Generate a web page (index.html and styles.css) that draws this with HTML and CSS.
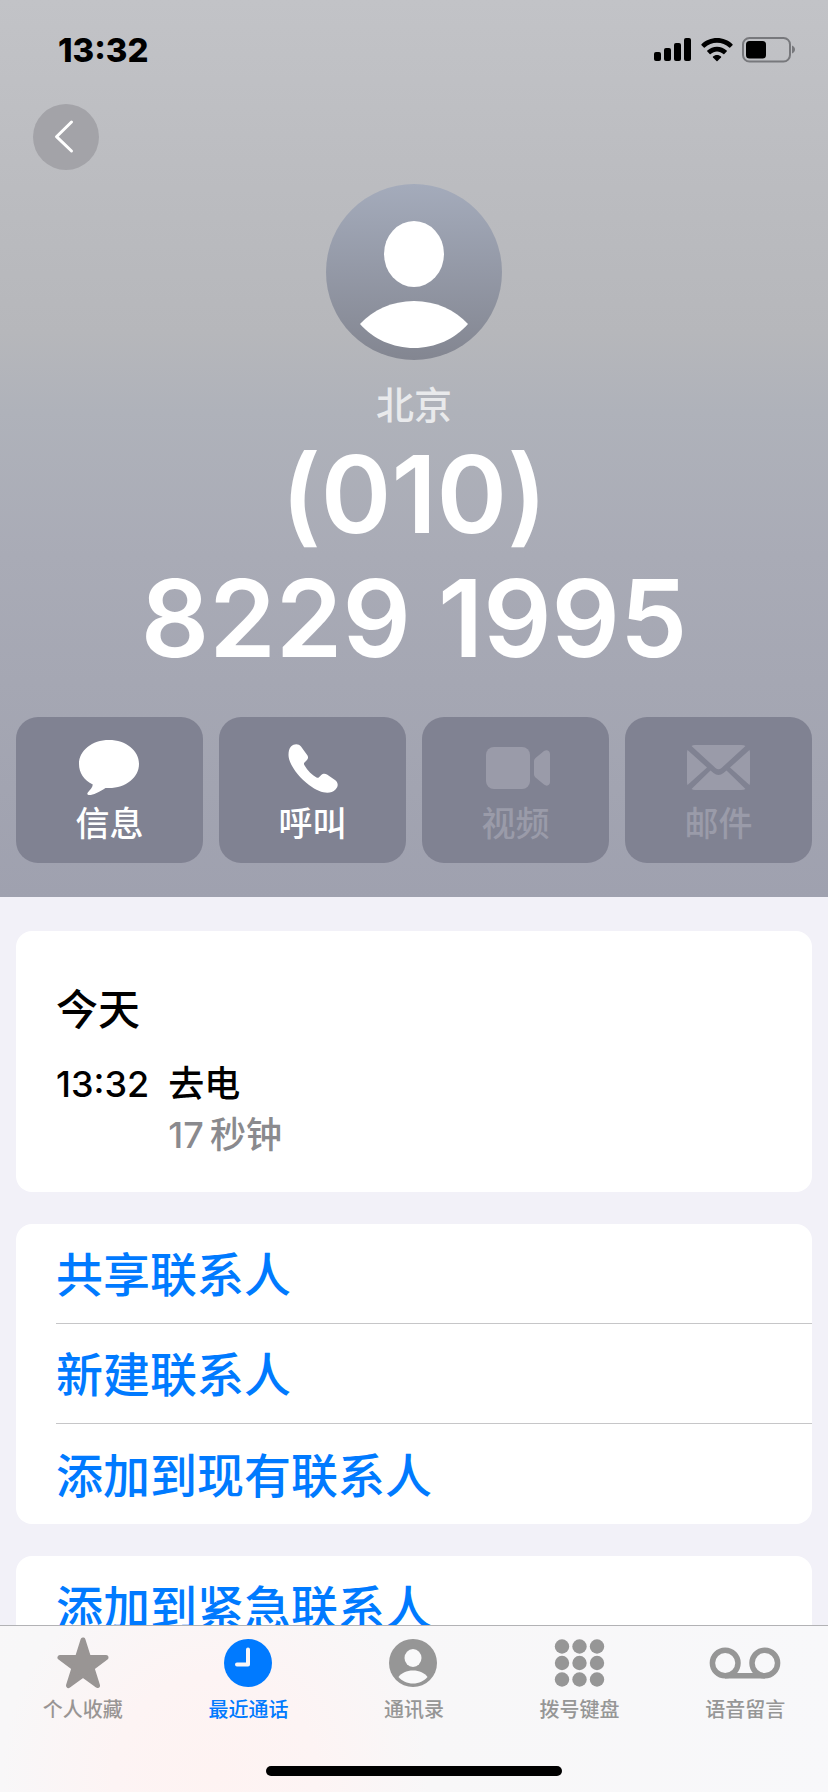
FILE: index.html
```html
<!DOCTYPE html>
<html lang="zh-CN">
<head>
<meta charset="utf-8">
<meta name="viewport" content="width=device-width, initial-scale=1">
<title>(010) 8229 1995</title>
<link rel="stylesheet" href="styles.css">
</head>
<body>
<main class="content">
  <header class="hero">
    <div class="status">
      <time class="clock">13:32</time>
      <div class="indicators">
        <svg class="signal" width="38" height="24" viewBox="0 0 38 24" aria-hidden="true">
          <rect x="0" y="14" width="7" height="9" rx="2"/><rect x="10" y="10" width="7" height="13" rx="2"/><rect x="20" y="5" width="7" height="18" rx="2"/><rect x="30" y="0" width="7" height="23" rx="2"/>
        </svg>
        <svg class="wifi" width="32" height="24" viewBox="0 0 32 24" aria-hidden="true">
          <path d="M16 0C22 0 27.500 2.300 31.500 6.200Q32 6.700 31.500 7.200L29.200 9.500Q28.700 10 28.200 9.500C24.900 6.400 20.600 4.700 16 4.700S7.100 6.400 3.800 9.500Q3.300 10 2.800 9.500L.5 7.200Q0 6.700.5 6.200C4.500 2.300 10 0 16 0Z"/>
          <path d="M16 8.700c3.700 0 7 1.400 9.700 3.700q.5.500 0 1l-2.400 2.500q-.5.500-1 0C20.500 14.400 18.300 13.500 16 13.500s-4.500.9-6.300 2.400q-.5.500-1 0L6.300 13.400q-.5-.5 0-1C9 10.100 12.300 8.700 16 8.700Z"/>
          <path d="M16 17c1.600 0 3 .6 4 1.500q.5.500 0 1L16.500 23q-.5.500-1 0L12 19.500q-.5-.5 0-1C13 17.600 14.400 17 16 17Z"/>
        </svg>
        <svg class="battery" width="54" height="26" viewBox="0 0 54 26" aria-hidden="true">
          <rect x="1" y="1" width="47" height="23.500" rx="6.500" fill="none" stroke="#77787c" stroke-width="2"/>
          <rect x="4" y="4" width="20" height="17.500" rx="3.500"/>
          <path d="M50 8.500c2 .8 3 2.300 3 4s-1 3.200-3 4Z" fill="#77787c"/>
        </svg>
      </div>
    </div>
    <nav class="nav">
      <button class="back" type="button" aria-label="返回">
        <svg width="66" height="66" viewBox="0 0 66 66" aria-hidden="true"><path d="M38.500 18L23.500 32.700L38.500 47" fill="none" stroke="#fff" stroke-width="3" stroke-linecap="round" stroke-linejoin="round"/></svg>
      </button>
    </nav>
    <svg class="avatar" width="176" height="176" viewBox="0 0 176 176" role="img" aria-label="头像">
      <defs><linearGradient id="shade" x1="0" y1="0" x2="0" y2="1"><stop offset="0" stop-color="#a4abbb"/><stop offset="1" stop-color="#838691"/></linearGradient></defs>
      <circle cx="88" cy="88" r="88" fill="url(#shade)"/>
      <ellipse cx="88" cy="70" rx="30" ry="33" fill="#fff"/>
      <path d="M34 140C47 126 66 117 88 117S129 126 142 140C129 155 109 164 88 164S47 155 34 140Z" fill="#fff"/>
    </svg>
    <p class="place">北京</p>
    <h1 class="number">(010) <br>8229 1995</h1>
    <div class="actions">
      <button class="action" type="button">
        <svg width="66" height="60" viewBox="0 0 66 60" aria-hidden="true"><path d="M32 6C49 6 62 16.500 62 30S49 54 32 54L28.500 54C22 58.500 15 61.500 11.500 61Q9.500 60.500 10.800 58.500C13 56 15.500 53.500 15.800 50.500C7 46 2 39 2 30C2 16.500 15 6 32 6Z"/></svg>
        <span>信息</span>
      </button>
      <button class="action" type="button">
        <svg width="66" height="60" viewBox="0 0 66 60" aria-hidden="true"><path d="M11 12.500C14 9.500 18.500 9.300 21 12.500L27.500 21.500C28.500 23.500 28 25 26.500 26.500L24.500 28.500Q23.500 29.500 24.300 31C27.500 36.500 32 41 36.500 43.500Q38 44.300 39 43.300L41 41.200C43 39.300 45 39.300 47 40.500L55 46C58.500 48.500 58.500 52.500 55.500 55.500C50 61 40.500 59.500 29 51C18.500 43 8.500 30 8.500 21C8.500 17.500 9 14.500 11 12.500Z"/></svg>
        <span>呼叫</span>
      </button>
      <button class="action" type="button" disabled>
        <svg width="66" height="60" viewBox="0 0 66 60" aria-hidden="true"><rect x="3" y="13" width="44" height="42" rx="8"/><path d="M51 27Q51 25.500 52.500 24L61 17C64 15 67 17 67 20V48C67 51 64 53 61 50.500L52.500 43.500Q51 42 51 40.500Z"/></svg>
        <span>视频</span>
      </button>
      <button class="action" type="button" disabled>
        <svg width="66" height="60" viewBox="0 0 66 60" aria-hidden="true"><path d="M5.500 12Q7 11 9 11H55Q58 11 59.500 12L35.500 34Q32.500 36.500 29.500 34ZM1.500 16L21 33.500L1.500 51Q1 50 1 48V19Q1 17 1.500 16ZM63.500 16L44 33.500L63.500 51Q64 50 64 48V19Q64 17 63.500 16ZM24.500 36.500L27.500 39Q32.500 43 37.500 39L40.500 36.500L59.500 55Q58 56 55 56H9Q7 56 5.500 55Z"/></svg>
        <span>邮件</span>
      </button>
    </div>
  </header>

  <div class="cards">
    <section class="card log">
      <h2 class="day">今天</h2>
      <div class="call">
        <time class="call-time">13:32</time>
        <div class="call-info">
          <p class="line">去电</p>
          <p class="line muted">17&#8201;秒钟</p>
        </div>
      </div>
    </section>
    <section class="card">
      <button class="row" type="button">共享联系人</button>
      <button class="row" type="button">新建联系人</button>
      <button class="row" type="button">添加到现有联系人</button>
    </section>
    <section class="card">
      <button class="row" type="button">添加到紧急联系人</button>
    </section>
  </div>
</main>

<footer class="dock">
  <nav class="tabs">
    <a class="tab warm" href="#favorites">
      <svg width="72" height="60" viewBox="0 0 72 60" aria-hidden="true"><path d="M36 9L41.500 26.500H59L45 37L50.500 54.500L36 44L21.500 54.500L27 37L13 26.500H30.500Z" fill="currentColor" stroke="currentColor" stroke-width="5" stroke-linejoin="round"/></svg>
      <span>个人收藏</span>
    </a>
    <a class="tab active" href="#recents" aria-current="page">
      <svg width="72" height="60" viewBox="0 0 72 60" aria-hidden="true"><circle cx="36" cy="32" r="24" fill="currentColor"/><path d="M36 18.500V33.500H25" fill="none" stroke="#faf7f8" stroke-width="4" stroke-linecap="round" stroke-linejoin="round"/></svg>
      <span>最近通话</span>
    </a>
    <a class="tab" href="#contacts">
      <svg width="72" height="60" viewBox="0 0 72 60" aria-hidden="true"><circle cx="35" cy="32" r="24" fill="currentColor"/><ellipse cx="35" cy="27" rx="8.500" ry="9" fill="#f9f9fa"/><path d="M20.500 46C23.500 42 28.500 39.500 35 39.500S46.500 42 49.500 46C46 50 41 52.500 35 52.500S24 50 20.500 46Z" fill="#f9f9fa"/></svg>
      <span>通讯录</span>
    </a>
    <a class="tab" href="#keypad">
      <svg width="72" height="60" viewBox="0 0 72 60" aria-hidden="true" fill="currentColor"><circle cx="18" cy="15.500" r="7.200"/><circle cx="35.500" cy="15.500" r="7.200"/><circle cx="53" cy="15.500" r="7.200"/><circle cx="18" cy="32" r="7.200"/><circle cx="35.500" cy="32" r="7.200"/><circle cx="53" cy="32" r="7.200"/><circle cx="18" cy="48.500" r="7.200"/><circle cx="35.500" cy="48.500" r="7.200"/><circle cx="53" cy="48.500" r="7.200"/></svg>
      <span>拨号键盘</span>
    </a>
    <a class="tab" href="#voicemail">
      <svg width="72" height="60" viewBox="0 0 72 60" aria-hidden="true" fill="none" stroke="currentColor" stroke-width="5.500"><circle cx="16.200" cy="32" r="12.800"/><circle cx="55.800" cy="32" r="12.800"/><path d="M16 44.800H56"/></svg>
      <span>语音留言</span>
    </a>
  </nav>
  <div class="home"></div>
</footer>
</body>
</html>
```
FILE: styles.css
```css
* { box-sizing: border-box; }

body {
  margin: 0;
  height: 100vh;
  display: flex;
  flex-direction: column;
  overflow: hidden;
  background: #f2f1f8;
  color: #000;
  font-family: Inter, "Noto Sans CJK SC", sans-serif;
  font-weight: 500;
}

h1, h2, p { margin: 0; font-weight: 500; }

button {
  border: 0;
  padding: 0;
  font: inherit;
  color: inherit;
  background: none;
}

svg { display: block; }

.content {
  flex: 1;
  min-height: 0;
  overflow: hidden;
}

.hero {
  display: flex;
  flex-direction: column;
  align-items: center;
  padding: 0 16px 34px;
  color: #fff;
  background: linear-gradient(#c2c3c7 0%, #bbbcc0 21%, #b6b7bb 37%, #afb2ba 46%, #a9abb6 62%, #a5a7b3 76%, #9fa1af 100%);
}

.status {
  align-self: stretch;
  display: flex;
  justify-content: space-between;
  align-items: center;
  height: 100px;
  padding: 0 16px 0 42px;
  color: #000;
}

.clock {
  font-size: 33px;
  font-weight: 800;
}

.indicators {
  display: flex;
  align-items: center;
  gap: 9px;
}

.nav {
  align-self: stretch;
  height: 84px;
  padding: 4px 17px 0;
}

.back {
  width: 66px;
  height: 66px;
  border-radius: 50%;
  background: #a3a3a8;
}

.place {
  margin-top: 20px;
  font-size: 38px;
  line-height: 50px;
  color: #e9eaec;
}

.number {
  margin-top: 2px;
  font-size: 107px;
  font-weight: 600;
  font-feature-settings: "calt" 0;
  line-height: 124px;
  text-align: center;
}

.actions {
  align-self: stretch;
  display: grid;
  grid-template-columns: repeat(4, 1fr);
  gap: 16px;
  margin-top: 37px;
}

.action {
  display: flex;
  flex-direction: column;
  align-items: center;
  height: 146px;
  padding-top: 17px;
  border-radius: 22px;
  background: #808292;
  font-size: 34px;
  line-height: 44px;
}

.action svg {
  fill: currentColor;
  overflow: visible;
}

.action span { margin-top: 8px; }

.action:disabled { color: #9a9ba9; }

.cards {
  display: flex;
  flex-direction: column;
  gap: 32px;
  padding: 34px 16px;
}

.card {
  border-radius: 16px;
  background: #fff;
}

.log { padding: 53px 40px 31px; }

.day {
  font-size: 42px;
  line-height: 52px;
}

.call {
  display: flex;
  gap: 19px;
  margin-top: 23px;
  font-size: 36px;
  line-height: 51px;
}

.muted { color: #8a8a8e; }

.row {
  display: block;
  width: calc(100% - 40px);
  height: 100px;
  margin-left: 40px;
  padding-bottom: 4px;
  font-size: 47px;
  text-align: left;
  color: #007aff;
}

.row:not(:last-child) { border-bottom: 1px solid #c6c6c8; }

.dock {
  display: flex;
  flex-direction: column;
  align-items: center;
  justify-content: space-between;
  height: 167px;
  padding-bottom: 16px;
  border-top: 1px solid #b2b2b5;
  background: radial-gradient(circle at 26% 90%, #fef3f2 0%, #fdf4f4 16%, #f8f7f8 34%, #f8f8fa 100%);
}

.tabs {
  align-self: stretch;
  display: grid;
  grid-template-columns: repeat(5, 1fr);
  padding-top: 5px;
}

.tab {
  display: flex;
  flex-direction: column;
  align-items: center;
  gap: 4px;
  font-size: 20px;
  line-height: 30px;
  text-decoration: none;
  color: #969696;
}

.warm { color: #999594; }

.active { color: #007aff; }

.home {
  width: 296px;
  height: 10px;
  border-radius: 5px;
  background: #000;
}
```
